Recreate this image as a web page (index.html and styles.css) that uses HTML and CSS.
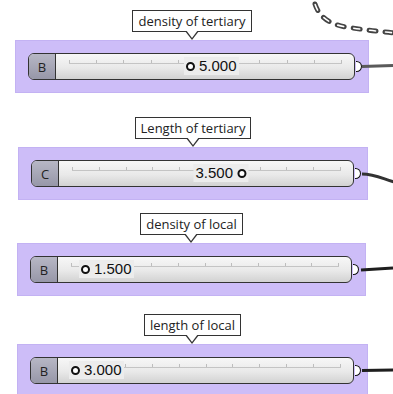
FILE: index.html
```html
<!DOCTYPE html>
<html lang="en">
<head>
    <meta charset="UTF-8">
    <title>Number sliders</title>
    <link rel="stylesheet" href="styles.css">
</head>
<body>
    <div class="canvas">
        <div class="node node-1">
            <div class="tip">density of tertiary</div>
            <div class="group">
                <div class="slider">
                    <div class="slider-name">B</div>
                    <div class="slider-track">
                        <div class="rail"><span></span><span></span><span></span><span></span><span></span><span></span><span></span><span></span><span></span><span></span></div>
                        <div class="value" style="left: 128px;"><span class="knob"></span><span>5.000</span></div>
                    </div>
                    <span class="port"></span>
                </div>
            </div>
        </div>

        <div class="node node-2">
            <div class="tip">Length of tertiary</div>
            <div class="group">
                <div class="slider">
                    <div class="slider-name">C</div>
                    <div class="slider-track">
                        <div class="rail"><span></span><span></span><span></span><span></span><span></span><span></span><span></span><span></span><span></span><span></span></div>
                        <div class="value flip" style="left: 189px;"><span class="knob"></span><span>3.500</span></div>
                    </div>
                    <span class="port"></span>
                </div>
            </div>
        </div>

        <div class="node node-3">
            <div class="tip">density of local</div>
            <div class="group">
                <div class="slider">
                    <div class="slider-name">B</div>
                    <div class="slider-track">
                        <div class="rail"><span></span><span></span><span></span><span></span><span></span><span></span><span></span><span></span><span></span><span></span></div>
                        <div class="value" style="left: 21px;"><span class="knob"></span><span>1.500</span></div>
                    </div>
                    <span class="port"></span>
                </div>
            </div>
        </div>

        <div class="node node-4">
            <div class="tip">length of local</div>
            <div class="group">
                <div class="slider">
                    <div class="slider-name">B</div>
                    <div class="slider-track">
                        <div class="rail"><span></span><span></span><span></span><span></span><span></span><span></span><span></span><span></span><span></span><span></span></div>
                        <div class="value" style="left: 11px;"><span class="knob"></span><span>3.000</span></div>
                    </div>
                    <span class="port"></span>
                </div>
            </div>
        </div>

        <!-- wires leaving the output ports -->
        <svg class="wires" width="393" height="394" viewBox="0 0 393 394">
            <path d="M315 4 Q 321 23 346 27 T 396 33" fill="none" stroke="#444" stroke-width="5" stroke-linecap="round" stroke-dasharray="7 9"/>
            <path d="M315 4 Q 321 23 346 27 T 396 33" fill="none" stroke="#fff" stroke-width="1.6" stroke-linecap="round" stroke-dasharray="6 10" stroke-dashoffset="-0.5"/>
            <path d="M362 66.5 L393 65.5" fill="none" stroke="#5a5a5a" stroke-width="3"/>
            <path d="M362 174 C 374 174, 381 178, 394 182" fill="none" stroke="#333" stroke-width="3"/>
            <path d="M361 270 L393 268" fill="none" stroke="#1e1e1e" stroke-width="3"/>
            <path d="M362 370.5 L393 370" fill="none" stroke="#1e1e1e" stroke-width="3"/>
        </svg>
    </div>
</body>
</html>
```

FILE: styles.css
```css
body {
    margin: 0;
    background: #fff;
}
.canvas {
    position: relative;
    width: 393px;
    height: 394px;
    overflow: hidden;
}
.node {
    position: absolute;
    display: flex;
    flex-direction: column;
    align-items: center;
}
.node-1 { left: 15px; top: 10px; width: 354px; }
.node-2 { left: 18px; top: 117px; width: 350px; }
.node-3 { left: 17px; top: 213px; width: 349px; }
.node-4 { left: 17px; top: 314px; width: 351px; }

.tip {
    position: relative;
    height: 22px;
    box-sizing: border-box;
    padding: 0 5px;
    margin-bottom: 8px;
    border: 1px solid #333;
    background: #fff;
    font-family: "Open Sans", sans-serif;
    font-size: 13px;
    line-height: 20px;
    color: #222;
    white-space: nowrap;
}
.tip::before,
.tip::after {
    content: "";
    position: absolute;
    left: 50%;
    width: 0;
    height: 0;
}
.tip::before {
    top: 100%;
    margin-left: -7px;
    border-left: 7px solid transparent;
    border-right: 7px solid transparent;
    border-top: 9px solid #333;
}
.tip::after {
    top: calc(100% - 1px);
    margin-left: -6px;
    border-left: 6px solid transparent;
    border-right: 6px solid transparent;
    border-top: 8.5px solid #fff;
}

.group {
    align-self: stretch;
    padding: 12px 13px 12px 12px;
    background: #cdbdf8;
    border: 1px solid #c3b2f3;
}
.slider {
    position: relative;
    display: flex;
    height: 27px;
    box-sizing: border-box;
    border: 1px solid #333;
    border-radius: 6px;
    background: linear-gradient(#f7f7f7, #e9e9e9 55%, #d2d2d2);
}
.slider-name {
    width: 26px;
    display: flex;
    align-items: center;
    justify-content: center;
    border-right: 1px solid #333;
    border-radius: 5px 0 0 5px;
    background: linear-gradient(#b7b7c5, #9797a8);
    font-family: "Open Sans", sans-serif;
    font-size: 13px;
    color: #222;
}
.slider-track {
    position: relative;
    flex: 1;
}
.rail {
    position: absolute;
    left: 13px;
    right: 12px;
    top: 6px;
    height: 3px;
    display: flex;
    border-bottom: 1px solid #c4c4c4;
}
.rail span {
    flex: 1;
    border-left: 1px solid #bdbdbd;
}
.rail span:last-child {
    border-right: 1px solid #bdbdbd;
}
.value {
    position: absolute;
    top: 3px;
    height: 18px;
    padding: 0 2px;
    display: flex;
    align-items: center;
    gap: 4px;
    background: #ececec;
    font-family: "Liberation Sans", Arial, sans-serif;
    font-size: 15px;
    line-height: 18px;
    color: #111;
}
.value.flip {
    flex-direction: row-reverse;
    transform: translateX(-100%);
}
.knob {
    width: 5px;
    height: 5px;
    border: 2px solid #111;
    border-radius: 50%;
    background: #fff;
}
.port {
    position: absolute;
    right: -8px;
    top: 50%;
    width: 5.5px;
    height: 9px;
    margin-top: -6px;
    border: 1.5px solid #111;
    border-left: none;
    border-radius: 0 6px 6px 0;
    background: #fff;
}
.wires {
    position: absolute;
    left: 0;
    top: 0;
    pointer-events: none;
}
```
